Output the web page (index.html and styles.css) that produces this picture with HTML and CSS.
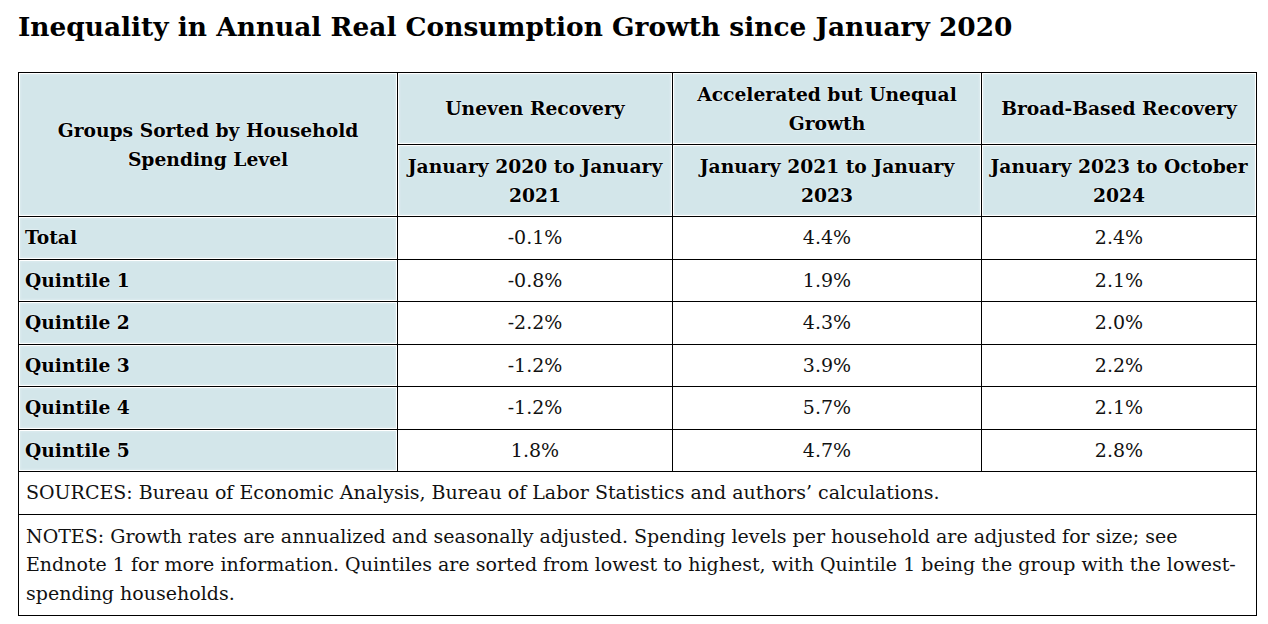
FILE: index.html
```html
<!DOCTYPE html>
<html>
<head>
<meta charset="utf-8">
<link rel="stylesheet" href="styles.css">
</head>
<body>
<h1 class="title">Inequality in Annual Real Consumption Growth since January 2020</h1>
<table class="data">
  <colgroup>
    <col class="c1"><col class="c2"><col class="c3"><col class="c4">
  </colgroup>
  <thead>
    <tr class="h1row">
      <th rowspan="2" class="shade">Groups Sorted by Household Spending Level</th>
      <th class="shade">Uneven Recovery</th>
      <th class="shade">Accelerated but Unequal Growth</th>
      <th class="shade">Broad-Based Recovery</th>
    </tr>
    <tr class="h2row">
      <th class="shade">January 2020 to January 2021</th>
      <th class="shade">January 2021 to January 2023</th>
      <th class="shade">January 2023 to October 2024</th>
    </tr>
  </thead>
  <tbody>
    <tr><th class="shade rowhead">Total</th><td>-0.1%</td><td>4.4%</td><td>2.4%</td></tr>
    <tr><th class="shade rowhead">Quintile 1</th><td>-0.8%</td><td>1.9%</td><td>2.1%</td></tr>
    <tr><th class="shade rowhead">Quintile 2</th><td>-2.2%</td><td>4.3%</td><td>2.0%</td></tr>
    <tr><th class="shade rowhead">Quintile 3</th><td>-1.2%</td><td>3.9%</td><td>2.2%</td></tr>
    <tr><th class="shade rowhead">Quintile 4</th><td>-1.2%</td><td>5.7%</td><td>2.1%</td></tr>
    <tr><th class="shade rowhead">Quintile 5</th><td>1.8%</td><td>4.7%</td><td>2.8%</td></tr>
    <tr><td colspan="4" class="note">SOURCES: Bureau of Economic Analysis, Bureau of Labor Statistics and authors’ calculations.</td></tr>
    <tr><td colspan="4" class="note notes">NOTES: Growth rates are annualized and seasonally adjusted. Spending levels per household are adjusted for size; see Endnote 1 for more information. Quintiles are sorted from lowest to highest, with Quintile 1 being the group with the lowest-spending households.</td></tr>
  </tbody>
</table>
</body>
</html>
```

FILE: styles.css
```css
html, body {
  margin: 0;
  padding: 0;
  background: #ffffff;
}
body {
  padding: 0 12px 0 18px;
  font-family: "DejaVu Serif", "Liberation Serif", serif;
  color: #111;
}
.title {
  margin: 0;
  padding-top: 9px;
  height: 72px;
  box-sizing: border-box;
  font-size: 26.4px;
  font-weight: bold;
  line-height: 36px;
  color: #000;
}
.data {
  width: 1238px;
  border-collapse: collapse;
  table-layout: fixed;
  font-size: 19px;
}
.c1 { width: 379px; }
.c2 { width: 275px; }
.c3 { width: 309px; }
.c4 { width: 275px; }
.data th, .data td {
  border: 1px solid #000;
  padding: 0 6px;
  line-height: 29px;
}
.data th {
  font-weight: bold;
  font-size: 18.7px;
  color: #000;
  text-shadow: 0 0 2px #fff;
}
.shade {
  background: #d3e6ea;
  box-shadow: inset 0 0 0 1px #fff, inset 0 0 3px 1px #e4f0f2;
}
.h1row th { height: 71px; }
.h2row th { height: 71px; }
.rowhead {
  text-align: left;
  padding-left: 7px;
}
.data tbody tr { height: 42.5px; }
.data td {
  text-align: center;
}
.data td.note {
  text-align: left;
  padding: 6px 7px 7px;
  line-height: 28.5px;
}
.data td.notes {
  padding-top: 7px;
  padding-bottom: 8px;
}
```
